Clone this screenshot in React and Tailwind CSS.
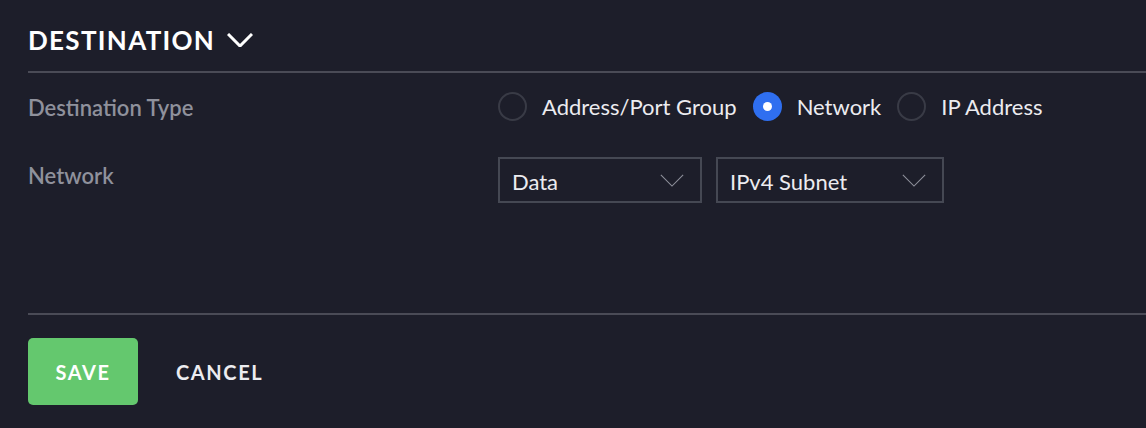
import React, { useState } from "react";

const Chevron = ({ className, strokeWidth = 1.5 }) => (
  <svg viewBox="0 0 26 14" className={className} fill="none" stroke="currentColor" strokeWidth={strokeWidth}>
    <path d="M1 1l12 12L25 1" />
  </svg>
);

const Radio = ({ label, checked, onClick }) => (
  <button type="button" onClick={onClick} className="flex items-center gap-[15px]">
    <span
      className={`w-[29px] h-[29px] rounded-full flex items-center justify-center ${
        checked ? "bg-[#2f6ff0]" : "border-2 border-[#393b46]"
      }`}
    >
      {checked && <span className="w-[9px] h-[9px] rounded-full bg-white" />}
    </span>
    <span className="text-[22px] text-[#ececf0] leading-none pt-[1px]">{label}</span>
  </button>
);

const Select = ({ value, width }) => (
  <div
    className={`${width} h-[46px] border-2 border-[#454853] flex items-center justify-between pl-[12px] pr-[15px]`}
  >
    <span className="text-[22px] text-[#ececf0] leading-none pt-[3px]">{value}</span>
    <Chevron className="w-[26px] h-[13px] text-[#8d8f9a]" strokeWidth={1.2} />
  </div>
);

export default function App() {
  const [type, setType] = useState("network");

  return (
    <div className="w-[1146px] h-[428px] bg-[#1d1e2a] pl-[28px] font-['Lato',sans-serif]">
      <div className="h-[73px] border-b-2 border-[#4a4b56] flex items-center pt-[9px] gap-[12px]">
        <h2 className="text-[26px] font-bold tracking-[0.05em] text-white leading-none">DESTINATION</h2>
        <Chevron className="w-[26px] h-[14px] text-white" strokeWidth={3} />
      </div>

      <div className="flex items-center h-[67px]">
        <div className="w-[470px] text-[22px] font-semibold text-[#8f919c] leading-none pt-[2px]">
          Destination Type
        </div>
        <div className="flex items-center gap-[16px]">
          <Radio label="Address/Port Group" checked={type === "group"} onClick={() => setType("group")} />
          <Radio label="Network" checked={type === "network"} onClick={() => setType("network")} />
          <Radio label="IP Address" checked={type === "ip"} onClick={() => setType("ip")} />
        </div>
      </div>

      <div className="flex items-start h-[173px] pt-[17px]">
        <div className="w-[470px] text-[22px] font-semibold text-[#8f919c] leading-none pt-[8px]">Network</div>
        <div className="flex gap-[14px]">
          <Select value="Data" width="w-[204px]" />
          <Select value="IPv4 Subnet" width="w-[228px]" />
        </div>
      </div>

      <div className="border-t-2 border-[#4a4b56] pt-[23px] flex items-center gap-[38px]">
        <button className="w-[110px] h-[67px] rounded-[5px] bg-[#64c86e] text-white text-[20px] font-bold tracking-[0.08em]">
          SAVE
        </button>
        <button className="text-[20px] font-bold tracking-[0.08em] text-[#ececf0]">CANCEL</button>
      </div>
    </div>
  );
}
